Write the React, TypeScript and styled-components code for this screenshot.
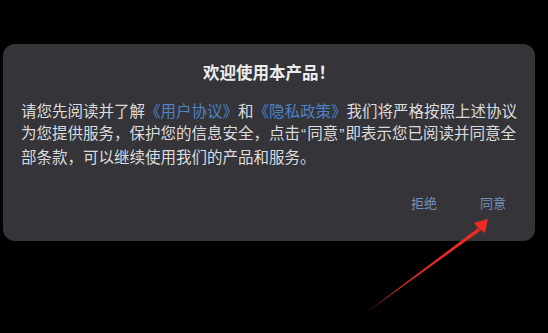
import styled, { createGlobalStyle } from "styled-components";

const Global = createGlobalStyle`
	html, body {
		margin: 0;
		padding: 0;
		background: #000;
	}
	body {
		width: 548px;
		height: 333px;
		overflow: hidden;
		font-family: "Noto Sans CJK SC", "Noto Sans", sans-serif;
	}
`;

const Screen = styled.div`
	position: relative;
	width: 548px;
	height: 333px;
	padding: 44px 0 0 3px;
	box-sizing: border-box;
`;

const Dialog = styled.section`
	width: 532px;
	height: 197px;
	box-sizing: border-box;
	background: #343439;
	border-radius: 12px;
	padding: 17px 0 0 18px;
	display: flex;
	flex-direction: column;
`;

const Title = styled.h2`
	margin: 0;
	padding-right: 18px;
	text-align: center;
	font-size: 16.5px;
	font-weight: 600;
	line-height: 22px;
	color: #ededee;
`;

const Body = styled.p`
	margin: 16px 0 0;
	font-size: 15.5px;
	line-height: 22px;
	color: #dcdcdf;
	white-space: nowrap;
`;

const Link = styled.span`
	color: #4f82c6;
`;

// curly quotes are narrow in the original, keep them in a latin face
const Quote = styled.span`
	font-family: "Liberation Sans", sans-serif;
	padding: 0 1px;
`;

const Actions = styled.div`
	display: flex;
	justify-content: flex-end;
	gap: 43px;
	margin-top: auto;
	margin-bottom: 28px;
	padding-right: 29px;
`;

const Action = styled.button`
	border: none;
	background: none;
	padding: 0;
	font-family: inherit;
	font-size: 13px;
	line-height: 20px;
	color: #7293bd;
	cursor: pointer;
`;

const Arrow = styled.svg`
	position: absolute;
	left: 0;
	top: 0;
	pointer-events: none;
`;

const App = () => {
	return (
		<Screen>
			<Global />
			<Dialog>
				<Title>欢迎使用本产品！</Title>
				<Body>
					请您先阅读并了解<Link>《用户协议》</Link>和<Link>《隐私政策》</Link>我们将严格按照上述协议
					<br />
					为您提供服务，保护您的信息安全，点击<Quote>“</Quote>同意<Quote>”</Quote>即表示您已阅读并同意全
					<br />
					部条款，可以继续使用我们的产品和服务。
				</Body>
				<Actions>
					<Action>拒绝</Action>
					<Action>同意</Action>
				</Actions>
			</Dialog>
			<Arrow width="548" height="333" viewBox="0 0 548 333">
				<polygon points="367,312 478,228 480,231" fill="#ee2a22" />
				<polygon points="488,219 474,223 479,229 485,233" fill="#ee2a22" />
			</Arrow>
		</Screen>
	);
};

export default App;
